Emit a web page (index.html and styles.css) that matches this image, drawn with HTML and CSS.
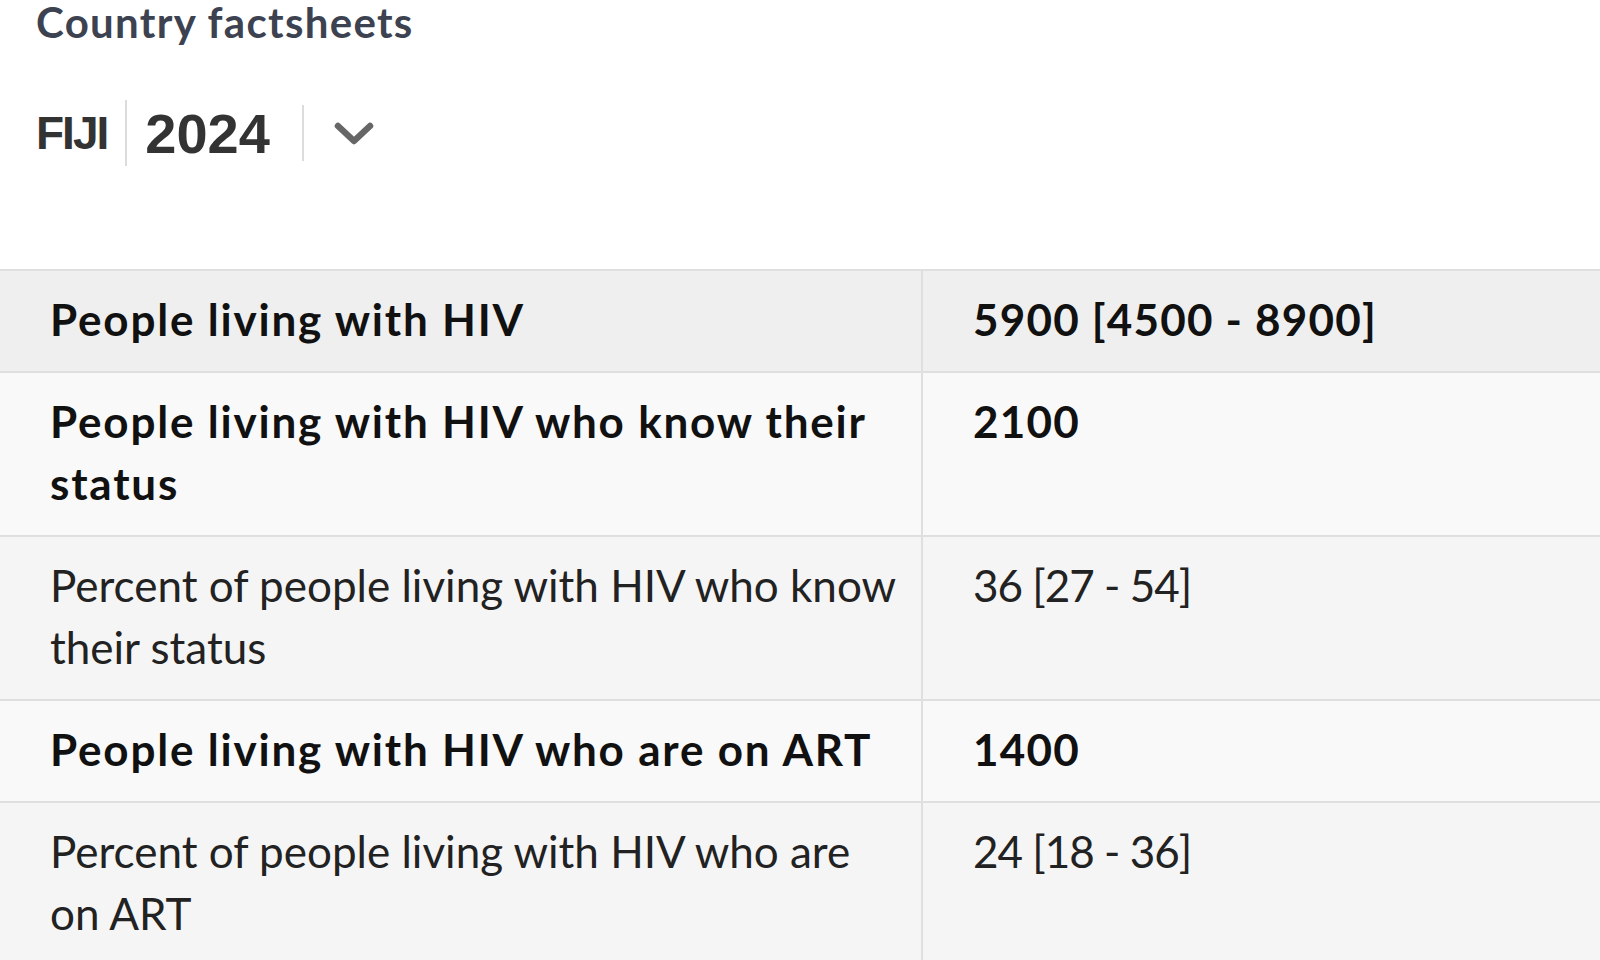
FILE: index.html
```html
<!DOCTYPE html>
<html lang="en">
<head>
<meta charset="utf-8">
<title>Country factsheets - Fiji 2024</title>
<link rel="stylesheet" href="styles.css">
</head>
<body>
<header class="page-head">
  <h1 class="title">Country factsheets</h1>
  <div class="selector">
    <span class="country">FIJI</span>
    <span class="year">2024</span>
    <span class="toggle" aria-label="Choose year">
      <svg width="40" height="26" viewBox="0 0 40 26"><polyline points="4,6 20,21 36,6" fill="none" stroke="#666" stroke-width="6.5" stroke-linecap="round" stroke-linejoin="round"/></svg>
    </span>
  </div>
</header>
<table class="facts">
  <tbody>
    <tr class="row-head">
      <th class="label strong">People living with HIV</th>
      <td class="value strong">5900 [4500 - 8900]</td>
    </tr>
    <tr class="row-light">
      <th class="label strong">People living with HIV who know their status</th>
      <td class="value strong">2100</td>
    </tr>
    <tr class="row-dark">
      <th class="label">Percent of people living with HIV who know their status</th>
      <td class="value">36 [27 - 54]</td>
    </tr>
    <tr class="row-light">
      <th class="label strong">People living with HIV who are on ART</th>
      <td class="value strong">1400</td>
    </tr>
    <tr class="row-dark">
      <th class="label">Percent of people living with HIV who are on ART</th>
      <td class="value">24 [18 - 36]</td>
    </tr>
  </tbody>
</table>
</body>
</html>
```
FILE: styles.css
```css
html, body {
  margin: 0;
  padding: 0;
  background: #ffffff;
}
body {
  font-family: "Lato", "Noto Sans", sans-serif;
  color: #222;
  overflow: hidden;
}
.page-head {
  padding-left: 36px;
}
.title {
  margin: 0;
  font-size: 42px;
  line-height: 44px;
  font-weight: 700;
  letter-spacing: 1.3px;
  color: #3d4250;
}
.selector {
  display: flex;
  align-items: center;
  margin-top: 56px;
  height: 66px;
}
.country {
  font-family: "Liberation Sans", Arial, sans-serif;
  font-weight: 700;
  font-size: 46px;
  letter-spacing: -2px;
  color: #333;
  padding-right: 18px;
  border-right: 2px solid #dcdcdc;
  height: 66px;
  display: flex;
  align-items: center;
}
.year {
  font-family: "Liberation Sans", Arial, sans-serif;
  font-weight: 700;
  font-size: 56px;
  color: #333;
  padding: 0 32px 0 18px;
  border-right: 2px solid #dcdcdc;
  height: 56px;
  display: flex;
  align-items: center;
}
.toggle {
  display: flex;
  align-items: center;
  padding-left: 30px;
}
.facts {
  margin-top: 103px;
  border-collapse: collapse;
  width: 1700px;
  table-layout: fixed;
}
.facts th, .facts td {
  text-align: left;
  vertical-align: top;
  font-size: 44px;
  line-height: 62px;
  padding: 17px 20px 21px 50px;
  border: 2px solid #dfdfdf;
  border-left: none;
  border-right: none;
}
.facts .label {
  width: 851px;
  border-right: 2px solid #dfdfdf;
}
.facts .strong {
  font-weight: 700;
  color: #111;
  letter-spacing: 1.8px;
}
.facts .value.strong {
  letter-spacing: 1.2px;
}
.facts th:not(.strong), .facts td:not(.strong) {
  font-weight: 400;
  color: #222;
}
.facts .value:not(.strong) {
  letter-spacing: -1px;
}
.row-head { background: #efefef; }
.row-light { background: #f9f9f9; }
.row-dark { background: #f5f5f5; }
```
